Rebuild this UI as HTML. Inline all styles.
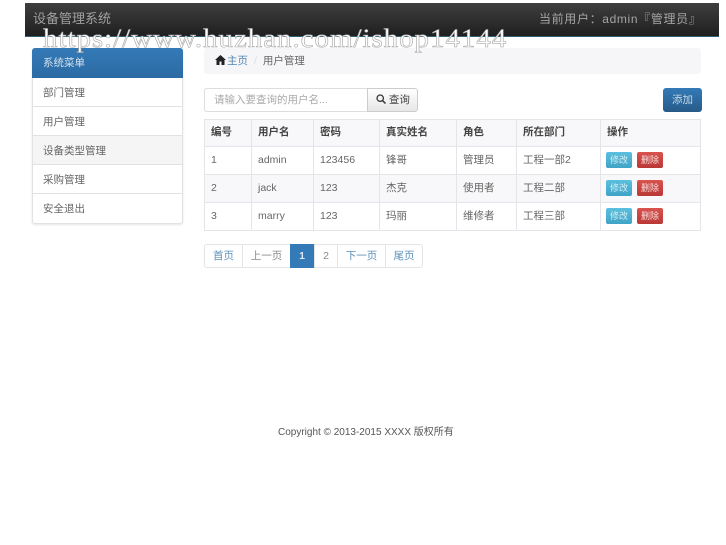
<!DOCTYPE html>
<html lang="zh">
<head>
<meta charset="utf-8">
<style>
html,body{margin:0;padding:0;width:726px;height:545px;overflow:hidden;background:#fff}
body{position:relative;font-family:"Liberation Sans","Noto Sans CJK SC",sans-serif;font-size:10.5px;color:#555}
.wrap{position:absolute;left:0;top:0;width:726px;height:545px;filter:blur(.3px)}
.a{position:absolute;box-sizing:border-box;white-space:nowrap}
.nav{left:25px;top:3px;width:694px;height:34px;background:linear-gradient(#3e3e3e,#1f1f1f);border-bottom:1px solid #2f5f74}
.wm{left:43px;top:24px;font-family:"Liberation Serif",serif;font-size:26px;line-height:30px;letter-spacing:.85px;color:#fff;-webkit-text-stroke:.6px #aaa;z-index:5;transform:scaleX(1.115);transform-origin:0 0}
.side{left:32px;top:48px;width:151px;height:176px;border:1px solid #e2e2e2;border-radius:3px;box-shadow:0 1px 2px rgba(0,0,0,.1);background:#fff}
.side div{position:absolute;left:0;width:149px;height:29px;line-height:30px;padding-left:10px;box-sizing:border-box;border-bottom:1px solid #e2e2e2;color:#666}
.side .h{top:-1px;left:-1px;width:151px;height:30px;background:linear-gradient(#337ab7,#2c6aa3);color:#d5e2ee;border:0;border-radius:3px 3px 0 0;padding-left:11px;line-height:30px}
.crumb{left:204px;top:48px;width:497px;height:26px;background:#f6f5f8;border-radius:3px;line-height:26px;padding-left:11px;color:#666}
.inp{left:204px;top:88px;width:164px;height:24px;border:1px solid #ddd;border-radius:3px 0 0 3px;line-height:22px;padding-left:9px;color:#aaa;background:#fff}
.sb{left:367px;top:88px;width:51px;height:24px;border:1px solid #ccc;border-radius:0 3px 3px 0;background:linear-gradient(#fff,#e6e6e6);line-height:22px;padding-left:8px;color:#444}
.add{left:663px;top:88px;width:39px;height:24px;border-radius:3px;background:linear-gradient(#337ab7,#265a88);color:#c8d9e8;text-align:center;line-height:24px}
table{position:absolute;left:204px;top:119px;width:496px;border-collapse:collapse;table-layout:fixed;font-size:10.5px;color:#666}
td,th{border:1px solid #e6e4e8;padding:0 0 2px 6px;text-align:left;font-weight:normal;box-sizing:border-box}
th{font-weight:bold;color:#444;background:#f8f7f9;height:27px;padding-bottom:3px}
td{height:28px}
tr.o td{background:#f8f7f9}
.b{display:inline-block;width:26px;height:16px;line-height:16px;text-align:center;border-radius:2px;color:#d8eef5;font-size:9px;vertical-align:middle;margin-left:-1px}
.i{background:linear-gradient(#5bc0de,#3fa3c6)}
.d{background:linear-gradient(#d9534f,#b93835);color:#f5dede;margin-left:5px}
.pg{top:244px;height:24px;border:1px solid #e4e4e4;line-height:22px;text-align:center;color:#5b8fb8;background:#fff}
.foot{left:278px;top:426px;color:#555;line-height:14px;font-size:10px}
</style>
</head>
<body>
<div class="wrap">
<div class="a nav"></div>
<div class="a" style="left:33px;top:10px;color:#a0a0a0;font-size:13px;line-height:18px">设备管理系统</div>
<div class="a" style="left:539px;top:10px;color:#a5a5a5;font-size:12px;line-height:18px;letter-spacing:.65px">当前用户：admin『管理员』</div>
<div class="a wm">https://www.huzhan.com/ishop14144</div>

<div class="a side">
<div class="h">系统菜单</div>
<div style="top:29px">部门管理</div>
<div style="top:58px">用户管理</div>
<div style="top:87px;background:#f5f5f5">设备类型管理</div>
<div style="top:116px">采购管理</div>
<div style="top:145px;border-bottom:0">安全退出</div>
</div>

<div class="a crumb"><svg width="11" height="10" viewBox="0 0 11 10" style="vertical-align:-1px"><path d="M5.5 0L11 5H9.500V10H6.500V6.500H4.500V10H1.500V5H0Z" fill="#222"/></svg><span style="color:#4f87b5;margin-left:1px">主页</span><span style="color:#ddd;margin:0 6px">/</span>用户管理</div>

<div class="a inp">请输入要查询的用户名...</div>
<div class="a sb"><svg width="10" height="10" viewBox="0 0 10 10" style="vertical-align:-1px"><circle cx="4.200" cy="4.200" r="3.200" fill="none" stroke="#333" stroke-width="1.300"/><path d="M6.500 6.500L9.500 9.500" stroke="#333" stroke-width="1.500"/></svg> 查询</div>
<div class="a add">添加</div>

<table>
<colgroup><col style="width:47px"><col style="width:62px"><col style="width:66px"><col style="width:77px"><col style="width:60px"><col style="width:84px"><col style="width:100px"></colgroup>
<tr><th>编号</th><th>用户名</th><th>密码</th><th>真实姓名</th><th>角色</th><th>所在部门</th><th>操作</th></tr>
<tr><td>1</td><td>admin</td><td>123456</td><td>锋哥</td><td>管理员</td><td>工程一部2</td><td><span class="b i">修改</span><span class="b d">删除</span></td></tr>
<tr class="o"><td>2</td><td>jack</td><td>123</td><td>杰克</td><td>使用者</td><td>工程二部</td><td><span class="b i">修改</span><span class="b d">删除</span></td></tr>
<tr><td>3</td><td>marry</td><td>123</td><td>玛丽</td><td>维修者</td><td>工程三部</td><td><span class="b i">修改</span><span class="b d">删除</span></td></tr>
</table>

<div class="a pg" style="left:204px;width:39px;border-radius:3px 0 0 3px">首页</div>
<div class="a pg" style="left:242px;width:49px;color:#888">上一页</div>
<div class="a pg" style="left:290px;width:24px;background:#337ab7;border-color:#337ab7;color:#dce8f2;font-weight:bold">1</div>
<div class="a pg" style="left:314px;width:24px;color:#888">2</div>
<div class="a pg" style="left:337px;width:49px">下一页</div>
<div class="a pg" style="left:385px;width:38px;border-radius:0 3px 3px 0">尾页</div>

<div class="a foot">Copyright © 2013-2015 XXXX 版权所有</div>
</div>
</body>
</html>
